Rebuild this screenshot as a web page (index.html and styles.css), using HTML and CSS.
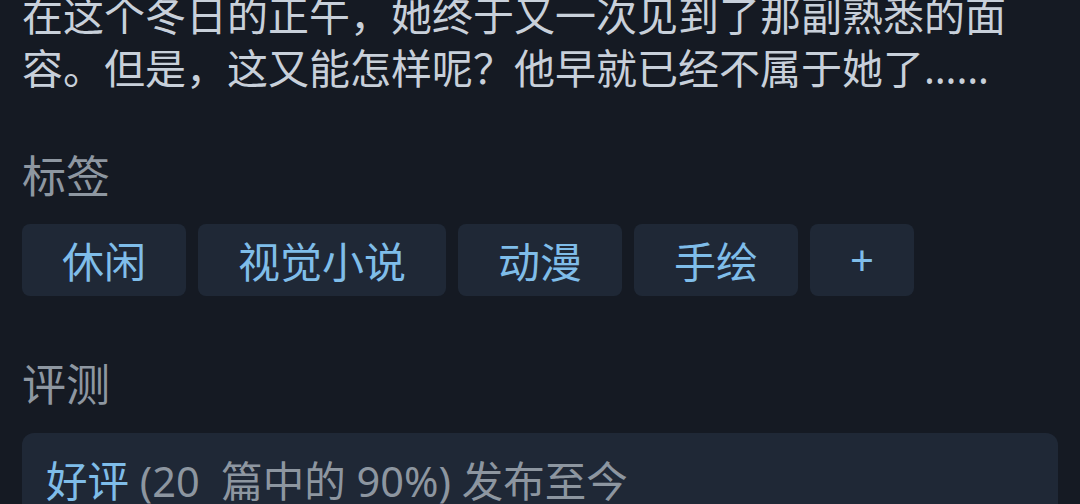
FILE: index.html
```html
<!DOCTYPE html>
<html lang="zh-CN">
<head>
  <meta charset="UTF-8" />
  <meta name="viewport" content="width=device-width, initial-scale=1" />
  <title>游戏详情</title>
  <link rel="stylesheet" href="styles.css">
</head>
<body>

  <div class="page">
    <!-- Game description -->
    <p class="desc">在这个冬日的正午，她终于又一次见到了那副熟悉的面容。但是，这又能怎样呢？他早就已经不属于她了……</p>

    <!-- Tags -->
    <h2 class="section-title">标签</h2>
    <div class="tags">
      <span class="tag">休闲</span>
      <span class="tag">视觉小说</span>
      <span class="tag">动漫</span>
      <span class="tag">手绘</span>
      <span class="tag">+</span>
    </div>

    <!-- Reviews -->
    <h2 class="section-title reviews-title">评测</h2>
    <div class="review-card">
      <span class="rating">好评</span> (20&nbsp; 篇中的 90%) 发布至今
    </div>
  </div>

</body>
</html>
```

FILE: styles.css
```css
html, body {
  margin: 0;
  padding: 0;
  background: #151a23;
  height: 100%;
  overflow: hidden;
}
body {
  font-family: "Noto Sans", "Noto Sans CJK SC", sans-serif;
}
.page {
  padding: 0 22px;
  margin-top: -11px;
}
.desc {
  margin: 0;
  font-size: 41px;
  line-height: 53px;
  color: #c8d0da;
}
.section-title {
  margin: 53px 0 19px;
  font-size: 44px;
  font-weight: normal;
  line-height: 57px;
  color: #8e97a1;
}
.reviews-title {
  margin-top: 60px;
  margin-bottom: 20px;
}
.tags {
  display: flex;
  gap: 12px;
}
.tag {
  display: flex;
  align-items: center;
  height: 72px;
  padding: 0 40px 2px;
  box-sizing: border-box;
  background: #1f2836;
  border-radius: 8px;
  font-size: 42px;
  color: #7fbde9;
}
.review-card {
  background: #1f2836;
  border-radius: 12px;
  padding: 22px 24px;
  font-size: 41.5px;
  line-height: 52px;
  color: #8d96a0;
  height: 200px;
}
.rating {
  color: #7fbde9;
}
```
